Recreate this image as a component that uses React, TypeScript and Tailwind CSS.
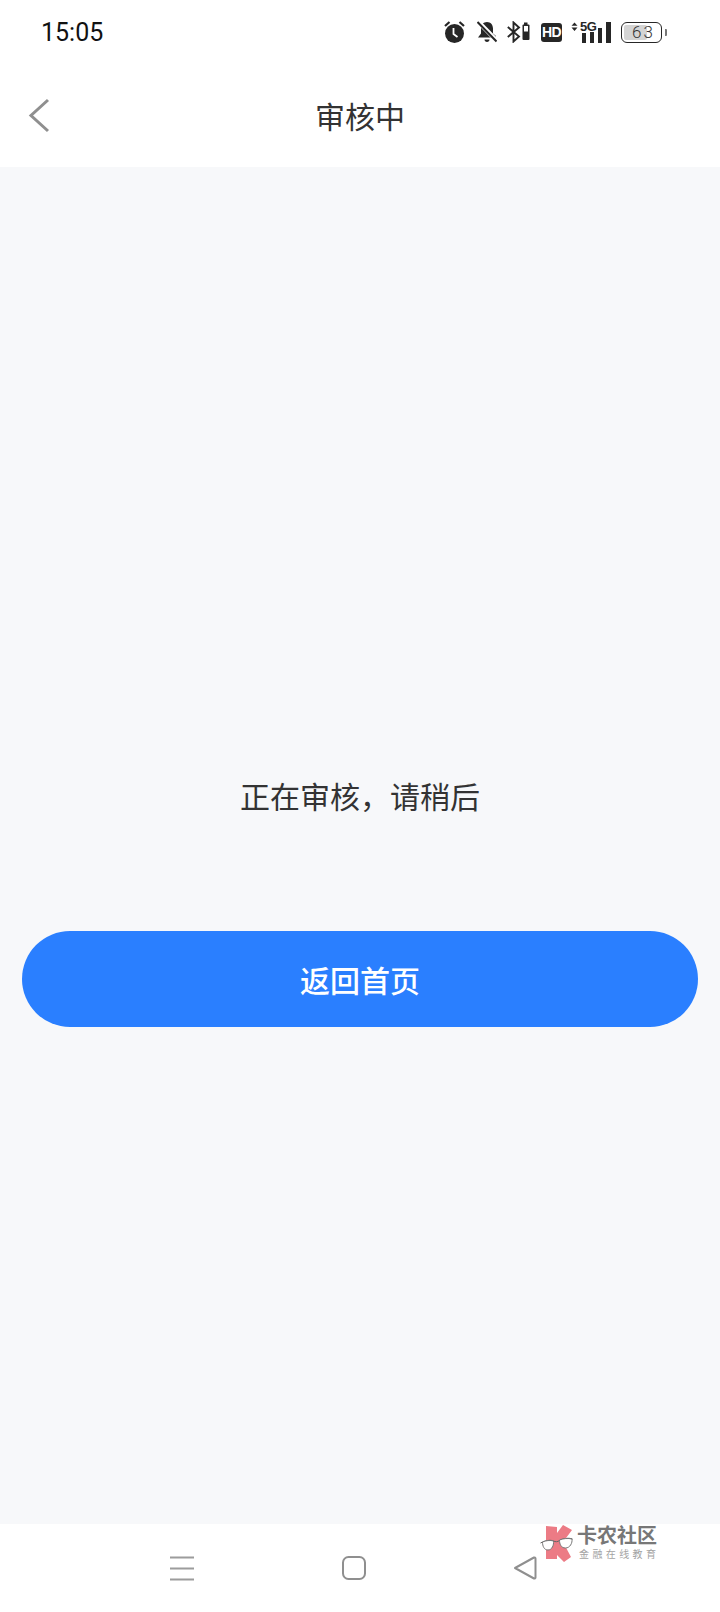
import React from "react";

const cjk = { fontFamily: '"Noto Sans CJK SC", "Noto Sans", sans-serif' };

function Alarm() {
  return (
    <svg width="21" height="24" viewBox="0 0 21 24">
      <circle cx="10.5" cy="13.5" r="9.5" fill="#262626" />
      <path d="M9.500 8v6l4 3" stroke="#fff" strokeWidth="1.800" fill="none" />
      <path d="M1 6 5.500 2M20 6 15.500 2" stroke="#262626" strokeWidth="2.200" fill="none" />
    </svg>
  );
}

function Bell() {
  return (
    <svg width="20" height="22" viewBox="0 0 20 22">
      <path d="M10 1c-3.600 0-6 2.800-6 6.500v5L1 16.500h18v-1.500l-3-2.500v-5C16 3.800 13.600 1 10 1z" fill="#262626" />
      <path d="M7.500 18.500h5c0 1.400-1 2.500-2.500 2.500s-2.500-1.100-2.500-2.500z" fill="#262626" />
      <path d="M1 0.500 20 20" stroke="#fff" strokeWidth="4.500" />
      <path d="M0.500 1 19.500 20.500" stroke="#262626" strokeWidth="2" />
    </svg>
  );
}

function Bluetooth() {
  return (
    <svg width="23" height="22" viewBox="0 0 23 22">
      <path d="M0.800 6 12 15.500 6.500 20.500V1.500L12 6.500 0.800 16" stroke="#262626" strokeWidth="1.900" fill="none" />
      <rect x="17" y="1.500" width="3.500" height="2.500" fill="#262626" />
      <rect x="15.500" y="3.500" width="7" height="15.500" rx="1" fill="#262626" />
      <rect x="17" y="5" width="4" height="5.500" fill="#fff" />
    </svg>
  );
}

function HD() {
  return (
    <div
      className="w-[21px] h-[19px] rounded-[3px] bg-[#262626] text-white text-[14px] font-bold leading-[19px] text-center tracking-[-0.6px]"
      style={{ fontFamily: '"Liberation Sans", sans-serif' }}
    >
      HD
    </div>
  );
}

function Signal() {
  return (
    <div className="relative w-[40px] h-[21px]">
      <svg width="40" height="21" viewBox="0 0 40 21" className="absolute left-0 top-0">
        <path d="M0.500 3.800 3.500 0.500l3 3.300zM0.500 5.500h6l-3 3.500z" fill="#262626" />
        <rect x="11" y="11" width="4" height="10" fill="#262626" />
        <rect x="19" y="10" width="4" height="11" fill="#262626" />
        <rect x="27" y="6" width="4" height="15" fill="#262626" />
        <rect x="35" y="0" width="5" height="21" fill="#262626" />
      </svg>
      <span
        className="absolute left-[9px] top-[-2px] text-[13px] font-bold leading-[14px] text-[#262626] tracking-[-0.5px]"
        style={{ fontFamily: '"Liberation Sans", sans-serif' }}
      >
        5G
      </span>
    </div>
  );
}

function Battery() {
  return (
    <div className="flex items-center gap-[3px]">
      <div className="relative w-[41px] h-[21px] rounded-[6px] border border-[#262626] p-[2px]">
        <div className="w-[23px] h-full rounded-[2px] bg-[#d4d4d4]" />
        <span
          className="absolute left-[10px] top-0 text-[17px] leading-[19px] text-[#333] tracking-[2px]"
          style={{ fontFamily: 'Roboto, sans-serif', fontWeight: 300 }}
        >
          63
        </span>
      </div>
      <div className="w-[2px] h-[7px] rounded-r-[1px] bg-[#777]" />
    </div>
  );
}

function Watermark() {
  return (
    <div className="absolute left-[540px] top-[1524px] flex items-start gap-[1px]">
      <svg width="36" height="38" viewBox="0 0 36 38" className="shrink-0">
        <path d="M6 2 17 3v6l6-8 9 5-9 12 8 15-7 5-7-7v4H6z" fill="#ec7b85" />
        <path d="M0.500 19c5-2.500 10-3.500 13-2 2 1 4 1 6-.5 4-2 9-3 13-1.500" stroke="#666" strokeWidth="1" fill="none" />
        <path d="M2.500 18c3-1.500 8-2 11-1 .5 4-1.500 9-5.500 9S2.500 22 2.500 18zM19.500 16c3-1.500 9-2 12.500-1 .5 4-2 9-6.500 9S19.500 20 19.500 16z" fill="#fff" stroke="#777" strokeWidth="1" />
      </svg>
      <div className="flex flex-col" style={cjk}>
        <span className="text-[20px] leading-[22px] font-bold text-[#777] whitespace-nowrap">卡农社区</span>
        <span className="ml-[2px] mt-[1px] text-[10px] leading-[13px] text-[#a3a3a3] tracking-[3.4px] whitespace-nowrap">金融在线教育</span>
      </div>
    </div>
  );
}

export default function App() {
  return (
    <div className="relative w-[720px] h-[1612px] flex flex-col bg-white overflow-hidden" style={cjk}>
      <div className="h-[64px] flex items-center justify-between pl-[41px] pr-[53px] shrink-0">
        <span
          className="text-[25px] leading-[28px] text-[#111] mt-[1px]"
          style={{ fontFamily: 'Roboto, sans-serif' }}
        >
          15:05
        </span>
        <div className="flex items-center">
          <Alarm />
          <div className="ml-[12px]"><Bell /></div>
          <div className="ml-[10px]"><Bluetooth /></div>
          <div className="ml-[11px]"><HD /></div>
          <div className="ml-[9px]"><Signal /></div>
          <div className="ml-[10px]"><Battery /></div>
        </div>
      </div>

      <div className="relative h-[103px] shrink-0 flex items-center justify-center">
        <svg width="24" height="38" viewBox="0 0 24 38" className="absolute left-[27px] top-[33px]">
          <path d="M21 3 4 18.500 21 34" stroke="#8f8f8f" strokeWidth="3" fill="none" />
        </svg>
        <span className="text-[30px] leading-[40px] text-[#333] -mt-[1px]">审核中</span>
      </div>

      <main className="flex-1 bg-[#f7f8fa] flex flex-col items-center pt-[607px] px-[22px]">
        <p className="text-[30px] leading-[42px] text-[#333]">正在审核，请稍后</p>
        <button className="mt-[115px] w-full h-[96px] rounded-full bg-[#2a7fff] text-white text-[30px] font-medium">
          返回首页
        </button>
      </main>

      <nav className="h-[88px] shrink-0 bg-white flex items-start pt-[32px] pl-[170px]">
        <svg width="24" height="25" viewBox="0 0 24 25" className="shrink-0">
          <path d="M0 1.500h24M0 12.500h24M0 23.500h24" stroke="#9c9c9c" strokeWidth="2" />
        </svg>
        <svg width="24" height="24" viewBox="0 0 24 24" className="ml-[148px] shrink-0">
          <rect x="1" y="1" width="22" height="22" rx="5.500" stroke="#8f8f8f" strokeWidth="2" fill="none" />
        </svg>
        <svg width="24" height="24" viewBox="0 0 24 24" className="ml-[147px] shrink-0">
          <path d="M2 12 21 1.500c.7-.3 1.500 0 1.500 1v19c0 1-.8 1.300-1.500 1z" stroke="#8f8f8f" strokeWidth="2" strokeLinejoin="round" fill="none" />
        </svg>
      </nav>

      <Watermark />
    </div>
  );
}
